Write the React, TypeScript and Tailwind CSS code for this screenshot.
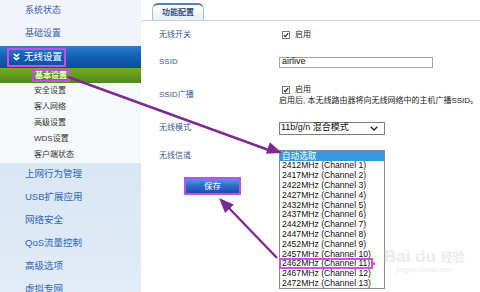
import type { ReactNode } from 'react';

const font = "font-['Liberation_Sans','Noto_Sans_CJK_SC',sans-serif]";

const subItems = ['安全设置', '客人网络', '高级设置', 'WDS设置', '客户端状态'];
const lowerItems = ['上网行为管理', 'USB扩展应用', '网络安全', 'QoS流量控制', '高级选项', '虚拟专网'];
const channels = [1, 2, 3, 4, 5, 6, 7, 8, 9, 10, 11, 12, 13];

const CheckBox = () => (
  <svg width="8" height="8" viewBox="0 0 8 8" className="shrink-0">
    <rect x="0.5" y="0.5" width="7" height="7" fill="#fff" stroke="#7a7a7a" />
    <path d="M1.8 4.1 L3.3 5.6 L6.2 2.2" fill="none" stroke="#222" strokeWidth="1.1" />
  </svg>
);

const Row = ({ label, h, children }: { label: string; h: string; children: ReactNode }) => (
  <div className={`flex items-center ${h}`}>
    <span className="w-[120px] shrink-0 text-[8px] text-[#3b5a98]">{label}</span>
    <div className="flex-1">{children}</div>
  </div>
);

const Sidebar = () => (
  <aside className="flex w-[141px] shrink-0 flex-col">
    <div className="bg-[#f1f5fa]">
      <div className="flex h-[21px] items-center pl-[25px] text-[9px] text-[#3a63ad]">系统状态</div>
      <div className="flex h-[25px] items-center pl-[25px] text-[9px] text-[#3a63ad]">基础设置</div>
      <div className="flex h-[22px] items-center bg-gradient-to-b from-[#2b7dcc] via-[#135fb6] to-[#0b4c9e] pl-[7px]">
        <div className="flex h-[19px] items-center gap-[4px] border-2 border-[#c34fe6] pl-[4px] pr-[2px]">
          <svg width="7" height="8" viewBox="0 0 7 8">
            <path d="M0.8 0.8 L3.5 3.2 L6.2 0.8 M0.8 4.3 L3.5 6.7 L6.2 4.3" fill="none" stroke="#fff" strokeWidth="1.6" />
          </svg>
          <span className="text-[9.5px] text-white">无线设置</span>
        </div>
      </div>
      <div className="flex h-[15px] items-center bg-gradient-to-b from-[#79aa28] to-[#4e8a12] pl-[32px]">
        <span className="border-2 border-[#c34fe6] px-[1px] text-[8px] leading-[9px] font-bold text-[#f4fbdc]">基本设置</span>
      </div>
      <div className="bg-[#f6f9fc]">
        {subItems.map((s) => (
          <div key={s} className="flex h-[16px] items-center pl-[34px] text-[8px] text-[#333]">
            {s}
          </div>
        ))}
      </div>
    </div>
    <div className="flex-1 bg-gradient-to-b from-[#d9e6f4] to-[#e3ecf7]">
      {lowerItems.map((s) => (
        <div key={s} className="flex h-[23px] items-center pl-[25px] text-[9.5px] text-[#2c66bc]">
          {s}
        </div>
      ))}
    </div>
  </aside>
);

const App = () => (
  <div className={`relative flex h-[292px] w-[480px] overflow-hidden bg-white ${font}`}>
    <Sidebar />
    <main className="flex flex-1 flex-col">
      <div className="flex h-[21px] items-end border-b border-[#c9d5e3] pl-[11px]">
        <div className="flex h-[17px] w-[52px] items-center justify-center rounded-t-[6px] border-x border-t-2 border-[#5a7eb3] border-x-[#a9bdd8] bg-gradient-to-b from-white to-[#e9eff7] text-[8px] font-bold text-[#344d80]">
          功能配置
        </div>
      </div>
      <div className="flex flex-col pl-[18px]">
        <Row label="无线开关" h="h-[28px]">
          <div className="flex items-center gap-[5px] pl-[3px] text-[8px] text-[#222]">
            <CheckBox />
            启用
          </div>
        </Row>
        <Row label="SSID" h="h-[26px]">
          <div className="flex h-[11px] w-[154px] items-center border border-[#a3a3a3] pl-[2px] text-[9px] text-[#111]">
            airlive
          </div>
        </Row>
        <Row label="SSID广播" h="h-[40px]">
          <div className="flex flex-col text-[8px] text-[#222]">
            <div className="flex h-[11px] items-center gap-[5px] pl-[3px]">
              <CheckBox />
              启用
            </div>
            <div className="flex h-[11px] items-center whitespace-nowrap">
              启用后, 本无线路由器将向无线网络中的主机广播SSID。
            </div>
          </div>
        </Row>
        <Row label="无线模式" h="h-[26px]">
          <div className="flex h-[13px] w-[106px] items-center justify-between border border-[#7d7d7d] pl-[1px] pr-[6px] text-[9px] text-[#111]">
            <span>11b/g/n 混合模式</span>
            <svg width="8" height="5" viewBox="0 0 8 5">
              <path d="M0.7 0.7 L4 4 L7.3 0.7" fill="none" stroke="#222" strokeWidth="1.3" />
            </svg>
          </div>
        </Row>
        <div className="mt-[9px] flex items-start">
          <div className="flex w-[120px] shrink-0 flex-col">
            <span className="flex h-[12px] items-center text-[8px] text-[#3b5a98]">无线信道</span>
            <div className="ml-[25px] mt-[15px] w-[57px] border-2 border-[#c34fe6]">
              <button className="flex h-[14px] w-full items-center justify-center bg-gradient-to-b from-[#5b95e6] via-[#2f69cc] to-[#1b4eae] text-[8.5px] text-white">
                保存
              </button>
            </div>
          </div>
          <ul className="w-[106px] border border-[#8a8a8a] bg-white text-[8.6px] text-[#111]">
            <li className="flex h-[9.8px] items-center bg-[#3399e0] pl-[2px] leading-none text-white">自动选取</li>
            {channels.map((c) => (
              <li key={c} className="flex h-[9.8px] items-center pl-[2px] leading-none whitespace-nowrap">
                {2407 + c * 5}MHz (Channel {c})
              </li>
            ))}
          </ul>
        </div>
      </div>
    </main>

    <div className="pointer-events-none absolute left-[384px] top-[248px] flex flex-col items-center text-[#ececec]">
      <span className="text-[17px] font-bold leading-none">
        Bai du <span className="text-[12px]">经验</span>
      </span>
      <span className="text-[7px]">jingyan.baidu.com</span>
    </div>

    <div className="pointer-events-none absolute left-[279px] top-[258px] h-[11px] w-[94px] border-2 border-[#d04fe6]" />
    <div className="pointer-events-none absolute left-[372px] top-[262px] h-[3px] w-[3px] rounded-full bg-[#d04fe6]" />

    <svg className="pointer-events-none absolute inset-0" width="480" height="292" viewBox="0 0 480 292">
      <line x1="68" y1="77" x2="270" y2="150.5" stroke="#7f2a91" strokeWidth="2.4" />
      <polygon points="282,153 265.9,153.7 269.9,142.3" fill="#7f2a91" />
      <line x1="277" y1="258" x2="228" y2="207" stroke="#7f2a91" strokeWidth="2.4" />
      <polygon points="219,198 233.7,204.6 225.1,213" fill="#7f2a91" />
    </svg>
  </div>
);

export default App;
